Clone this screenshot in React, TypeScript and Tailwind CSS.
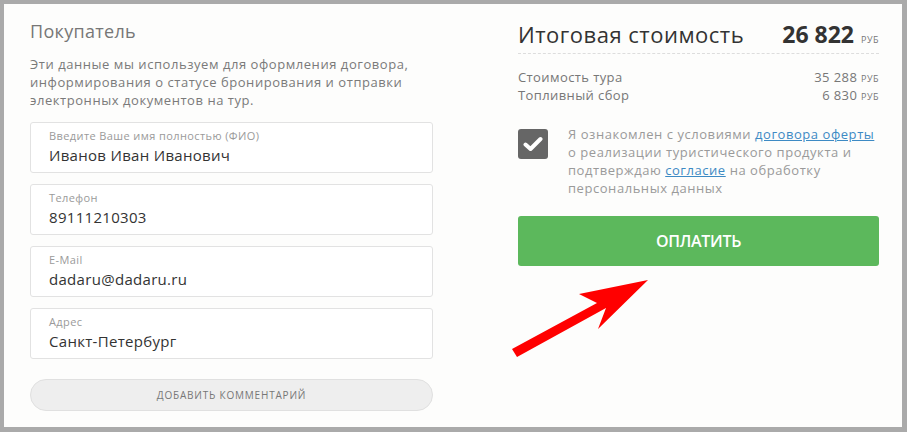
import React from "react";

const Field = ({ label, value }: { label: string; value: string }) => (
  <div className="h-[51px] rounded-[3px] border border-[#e2e2e2] bg-white pl-[18px] pt-[5px]">
    <div className="text-[11px] leading-[16px] tracking-[0.4px] text-[#9a9a9a]">{label}</div>
    <div className="mt-[1px] text-[15px] leading-[20px] tracking-[0.3px] text-[#333]">{value}</div>
  </div>
);

export default function App() {
  return (
    <div className="font-['Open_Sans',sans-serif] h-[432px] w-[907px] border-b-[5px] border-l-4 border-r-[5px] border-t-4 border-[#aaaaaa] bg-[#fdfdfc] relative">
      <div className="flex h-full">
        {/* Left column */}
        <div className="ml-[26px] w-[403px] pt-[15px]">
          <div className="text-[18px] leading-[24px] tracking-[0.3px] text-[#777]">Покупатель</div>
          <div className="mt-[12px] text-[13px] leading-[18px] tracking-[0.55px] text-[#7a7a7a]">
            Эти данные мы используем для оформления договора, информирования о статусе бронирования и отправки
            электронных документов на тур.
          </div>
          <div className="mt-[13px] flex flex-col gap-[11px]">
            <Field label="Введите Ваше имя полностью (ФИО)" value="Иванов Иван Иванович" />
            <Field label="Телефон" value="89111210303" />
            <Field label="E-Mail" value="dadaru@dadaru.ru" />
            <Field label="Адрес" value="Санкт-Петербург" />
          </div>
          <div className="mt-[20px] flex h-[32px] items-center justify-center rounded-full border border-[#e0e0e0] bg-[#eeeeee] text-[10px] tracking-[0.8px] text-[#777]">
            ДОБАВИТЬ КОММЕНТАРИЙ
          </div>
        </div>

        {/* Right column */}
        <div className="ml-[85px] w-[361px] pt-[15px]">
          <div className="flex items-baseline justify-between border-b border-dashed border-[#dddddd] pb-[4px]">
            <div className="text-[22px] leading-[30px] tracking-[0.5px] text-[#333]">Итоговая стоимость</div>
            <div className="flex items-baseline">
              <span className="text-[23px] font-bold leading-[30px] text-[#333]">26 822</span>
              <span className="ml-[7px] text-[9px] tracking-[0.5px] text-[#777]">РУБ</span>
            </div>
          </div>
          <div className="mt-[14px] text-[13px] leading-[18px] tracking-[0.4px] text-[#777]">
            <div className="flex h-[18px] justify-between">
              <span>Стоимость тура</span>
              <span>
                35 288 <span className="text-[9px] tracking-[0.5px]">РУБ</span>
              </span>
            </div>
            <div className="flex h-[18px] justify-between">
              <span>Топливный сбор</span>
              <span>
                6 830 <span className="text-[9px] tracking-[0.5px]">РУБ</span>
              </span>
            </div>
          </div>
          <div className="mt-[21px] flex">
            <div className="mt-[4px] flex h-[30px] w-[30px] shrink-0 items-center justify-center rounded-[3px] bg-[#666666]">
              <svg width="20" height="16" viewBox="0 0 20 16">
                <path d="M2.5 8.5 L7.5 13 L17.5 3" fill="none" stroke="white" strokeWidth="4" strokeLinecap="round" strokeLinejoin="round" />
              </svg>
            </div>
            <div className="ml-[20px] text-[13px] leading-[18px] tracking-[0.55px] text-[#9a9a9a]">
              Я ознакомлен с условиями{" "}
              <span className="text-[#3d8ac4] underline">договора оферты</span> о реализации туристического продукта и
              подтверждаю <span className="text-[#3d8ac4] underline">согласие</span> на обработку персональных данных
            </div>
          </div>
          <div className="mt-[19px] flex h-[50px] items-center justify-center rounded-[3px] bg-[#5cb85c] text-[16px] font-semibold tracking-[-0.3px] text-white">
            ОПЛАТИТЬ
          </div>
        </div>
      </div>

      <svg className="absolute left-[-4px] top-[-4px]" width="907" height="432" viewBox="0 0 907 432">
        <polygon
          points="512,349 597,303 579,294 648,280 598,329 606,308 517,357"
          fill="#ff0000"
        />
      </svg>
    </div>
  );
}
